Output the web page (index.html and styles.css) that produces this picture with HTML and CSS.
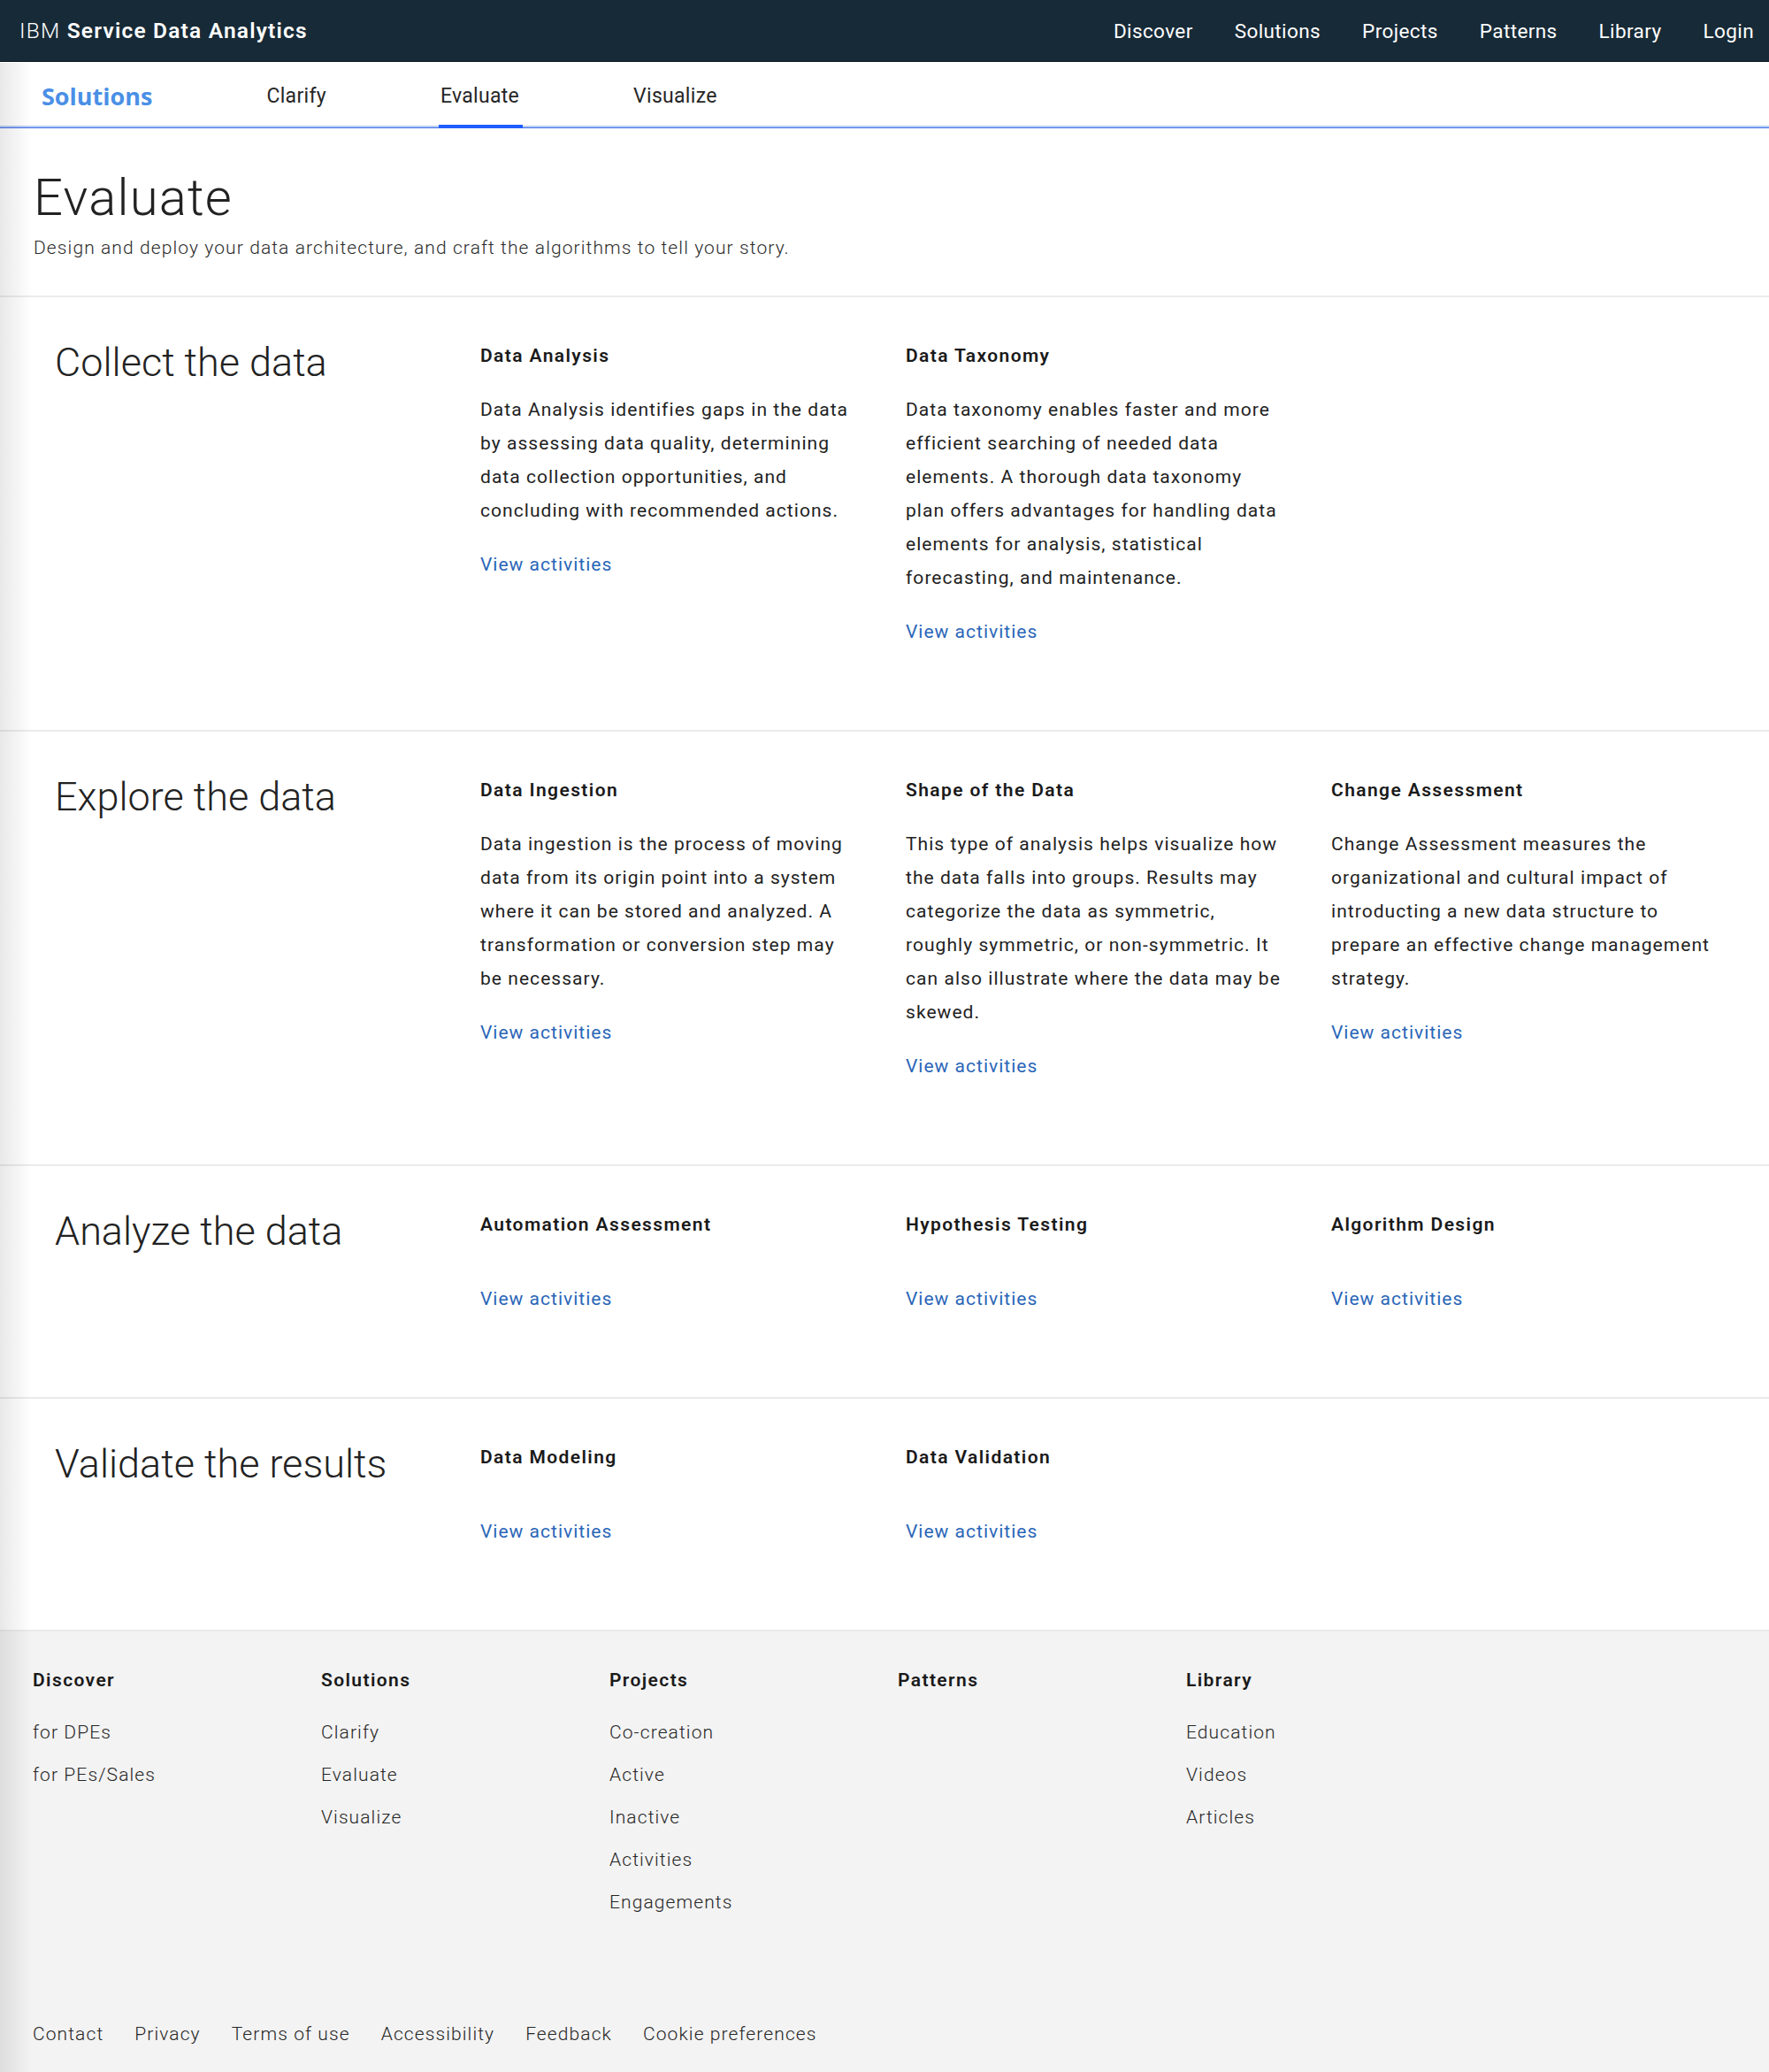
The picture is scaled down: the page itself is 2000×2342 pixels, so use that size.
FILE: index.html
```html
<!DOCTYPE html>
<html lang="en">
<head>
<meta charset="utf-8">
<title>Evaluate - IBM Service Data Analytics</title>
<link rel="stylesheet" href="styles.css">
</head>
<body>
<div class="page">
  <header class="topnav">
    <div class="brand"><span class="brand-ibm">IBM</span> <span class="brand-name">Service Data Analytics</span></div>
    <nav class="mainlinks">
      <a href="#">Discover</a>
      <a href="#">Solutions</a>
      <a href="#">Projects</a>
      <a href="#">Patterns</a>
      <a href="#">Library</a>
      <a href="#">Login</a>
    </nav>
  </header>

  <nav class="subnav">
    <a class="subnav-title" href="#">Solutions</a>
    <a class="tab" href="#">Clarify</a>
    <a class="tab active" href="#">Evaluate</a>
    <a class="tab" href="#">Visualize</a>
  </nav>

  <section class="intro">
    <h1>Evaluate</h1>
    <p>Design and deploy your data architecture, and craft the algorithms to tell your story.</p>
  </section>

  <section class="stage">
    <h2>Collect the data</h2>
    <div class="card">
      <h3>Data Analysis</h3>
      <p>Data Analysis identifies gaps in the data<br>by assessing data quality, determining<br>data collection opportunities, and<br>concluding with recommended actions.</p>
      <a href="#">View activities</a>
    </div>
    <div class="card">
      <h3>Data Taxonomy</h3>
      <p>Data taxonomy enables faster and more<br>efficient searching of needed data<br>elements. A thorough data taxonomy<br>plan offers advantages for handling data<br>elements for analysis, statistical<br>forecasting, and maintenance.</p>
      <a href="#">View activities</a>
    </div>
  </section>

  <section class="stage">
    <h2>Explore the data</h2>
    <div class="card">
      <h3>Data Ingestion</h3>
      <p>Data ingestion is the process of moving<br>data from its origin point into a system<br>where it can be stored and analyzed. A<br>transformation or conversion step may<br>be necessary.</p>
      <a href="#">View activities</a>
    </div>
    <div class="card">
      <h3>Shape of the Data</h3>
      <p>This type of analysis helps visualize how<br>the data falls into groups. Results may<br>categorize the data as symmetric,<br>roughly symmetric, or non-symmetric. It<br>can also illustrate where the data may be<br>skewed.</p>
      <a href="#">View activities</a>
    </div>
    <div class="card">
      <h3>Change Assessment</h3>
      <p>Change Assessment measures the<br>organizational and cultural impact of<br>introducting a new data structure to<br>prepare an effective change management<br>strategy.</p>
      <a href="#">View activities</a>
    </div>
  </section>

  <section class="stage">
    <h2>Analyze the data</h2>
    <div class="card">
      <h3>Automation Assessment</h3>
      <p></p>
      <a href="#">View activities</a>
    </div>
    <div class="card">
      <h3>Hypothesis Testing</h3>
      <p></p>
      <a href="#">View activities</a>
    </div>
    <div class="card">
      <h3>Algorithm Design</h3>
      <p></p>
      <a href="#">View activities</a>
    </div>
  </section>

  <section class="stage">
    <h2>Validate the results</h2>
    <div class="card">
      <h3>Data Modeling</h3>
      <p></p>
      <a href="#">View activities</a>
    </div>
    <div class="card">
      <h3>Data Validation</h3>
      <p></p>
      <a href="#">View activities</a>
    </div>
  </section>

  <footer class="footer">
    <div class="footer-cols">
      <div class="fcol">
        <h4>Discover</h4>
        <ul><li><a href="#">for DPEs</a></li><li><a href="#">for PEs/Sales</a></li></ul>
      </div>
      <div class="fcol">
        <h4>Solutions</h4>
        <ul><li><a href="#">Clarify</a></li><li><a href="#">Evaluate</a></li><li><a href="#">Visualize</a></li></ul>
      </div>
      <div class="fcol">
        <h4>Projects</h4>
        <ul><li><a href="#">Co-creation</a></li><li><a href="#">Active</a></li><li><a href="#">Inactive</a></li><li><a href="#">Activities</a></li><li><a href="#">Engagements</a></li></ul>
      </div>
      <div class="fcol">
        <h4>Patterns</h4>
        <ul></ul>
      </div>
      <div class="fcol">
        <h4>Library</h4>
        <ul><li><a href="#">Education</a></li><li><a href="#">Videos</a></li><li><a href="#">Articles</a></li></ul>
      </div>
    </div>
    <div class="legal">
      <a href="#">Contact</a>
      <a href="#">Privacy</a>
      <a href="#">Terms of use</a>
      <a href="#">Accessibility</a>
      <a href="#">Feedback</a>
      <a href="#">Cookie preferences</a>
    </div>
  </footer>
  <div class="edge-shade"></div>
</div>
</body>
</html>
```

FILE: styles.css
```css
* { box-sizing: border-box; }

html, body {
  margin: 0;
  padding: 0;
  background: #ffffff;
}

body {
  font-family: Roboto, "Liberation Sans", Arial, sans-serif;
  color: #1f1f1f;
}

a { text-decoration: none; color: inherit; }

.page {
  position: relative;
  min-height: 2342px;
  display: flex;
  flex-direction: column;
}

/* top navigation */
.topnav {
  height: 70px;
  background: #172a37;
  border-bottom: 1px solid #0c161d;
  display: flex;
  align-items: center;
  justify-content: space-between;
  padding: 0 17px 0 22px;
  color: #ffffff;
}

.brand {
  font-size: 24.5px;
  letter-spacing: 1.2px;
}
.brand-ibm { font-weight: 300; }
.brand-name { font-weight: 600; }

.mainlinks {
  display: flex;
  gap: 47px;
  font-size: 22.5px;
  letter-spacing: 0.4px;
}
.mainlinks a { color: #ffffff; }

/* sub navigation */
.subnav {
  height: 75px;
  display: flex;
  align-items: stretch;
  gap: 129px;
  padding: 0 0 0 47px;
  border-bottom: 1px solid #3f72ea;
  box-shadow: inset 0 -2px 0 #b9cbf4;
  background: #ffffff;
}

.subnav-title {
  display: flex;
  align-items: center;
  padding-top: 3px;
  font-family: "Open Sans", Roboto, sans-serif;
  font-weight: 700;
  font-size: 27px;
  color: #4a8fe6;
}

.tab {
  position: relative;
  display: flex;
  align-items: center;
  padding-top: 3px;
  font-size: 23px;
  letter-spacing: 0.3px;
  color: #262626;
  font-weight: 400;
}
.tab.active::after {
  content: "";
  position: absolute;
  left: -2px;
  right: -4px;
  bottom: -1px;
  height: 4px;
  background: #1f5eff;
}

/* intro */
.intro {
  padding: 43px 38px 38px;
  border-bottom: 2px solid #ebebeb;
}
.intro h1 {
  margin: 0;
  font-size: 58px;
  line-height: 70px;
  font-weight: 300;
  letter-spacing: 1.2px;
  color: #222222;
}
.intro p {
  margin: 6px 0 0;
  font-size: 21px;
  line-height: 32px;
  font-weight: 300;
  letter-spacing: 1.1px;
  color: #2b2b2b;
}

/* stages */
.stage {
  display: grid;
  grid-template-columns: repeat(4, 481px);
  padding: 47px 0 92px 62px;
  border-bottom: 2px solid #ebebeb;
}

.stage h2 {
  margin: 0;
  font-size: 45px;
  line-height: 54px;
  font-weight: 300;
  color: #222222;
}

.card {
  display: flex;
  flex-direction: column;
  align-items: flex-start;
  gap: 23px;
  padding-right: 8px;
}
.card h3 {
  margin: 0;
  font-size: 21px;
  line-height: 38px;
  font-weight: 600;
  letter-spacing: 1.4px;
  color: #1a1a1a;
}
.card p {
  margin: 0;
  font-size: 21px;
  line-height: 38px;
  font-weight: 400;
  letter-spacing: 1.05px;
  white-space: nowrap;
  color: #222222;
}
.card a {
  font-size: 21px;
  line-height: 38px;
  letter-spacing: 1px;
  color: #2a66b8;
}

/* footer */
.footer {
  flex: 1;
  background: #f3f3f3;
  padding: 39px 0 21px 37px;
}

.footer-cols {
  display: grid;
  grid-template-columns: repeat(5, 326px);
}

.fcol h4 {
  margin: 0;
  font-size: 21px;
  line-height: 32px;
  font-weight: 600;
  letter-spacing: 1.4px;
  color: #1a1a1a;
}
.fcol ul {
  list-style: none;
  margin: 19px 0 0;
  padding: 0;
}
.fcol li {
  font-size: 21px;
  line-height: 48px;
  font-weight: 300;
  letter-spacing: 1.1px;
  color: #262626;
}

.legal {
  display: flex;
  gap: 35px;
  margin-top: 101px;
  font-size: 21px;
  line-height: 48px;
  font-weight: 300;
  letter-spacing: 1.1px;
  color: #262626;
}

/* soft shadow along the left edge */
.edge-shade {
  position: absolute;
  left: 0;
  top: 71px;
  bottom: 0;
  width: 36px;
  background: linear-gradient(to right, rgba(0, 0, 0, 0.09), rgba(0, 0, 0, 0));
  pointer-events: none;
}
```
